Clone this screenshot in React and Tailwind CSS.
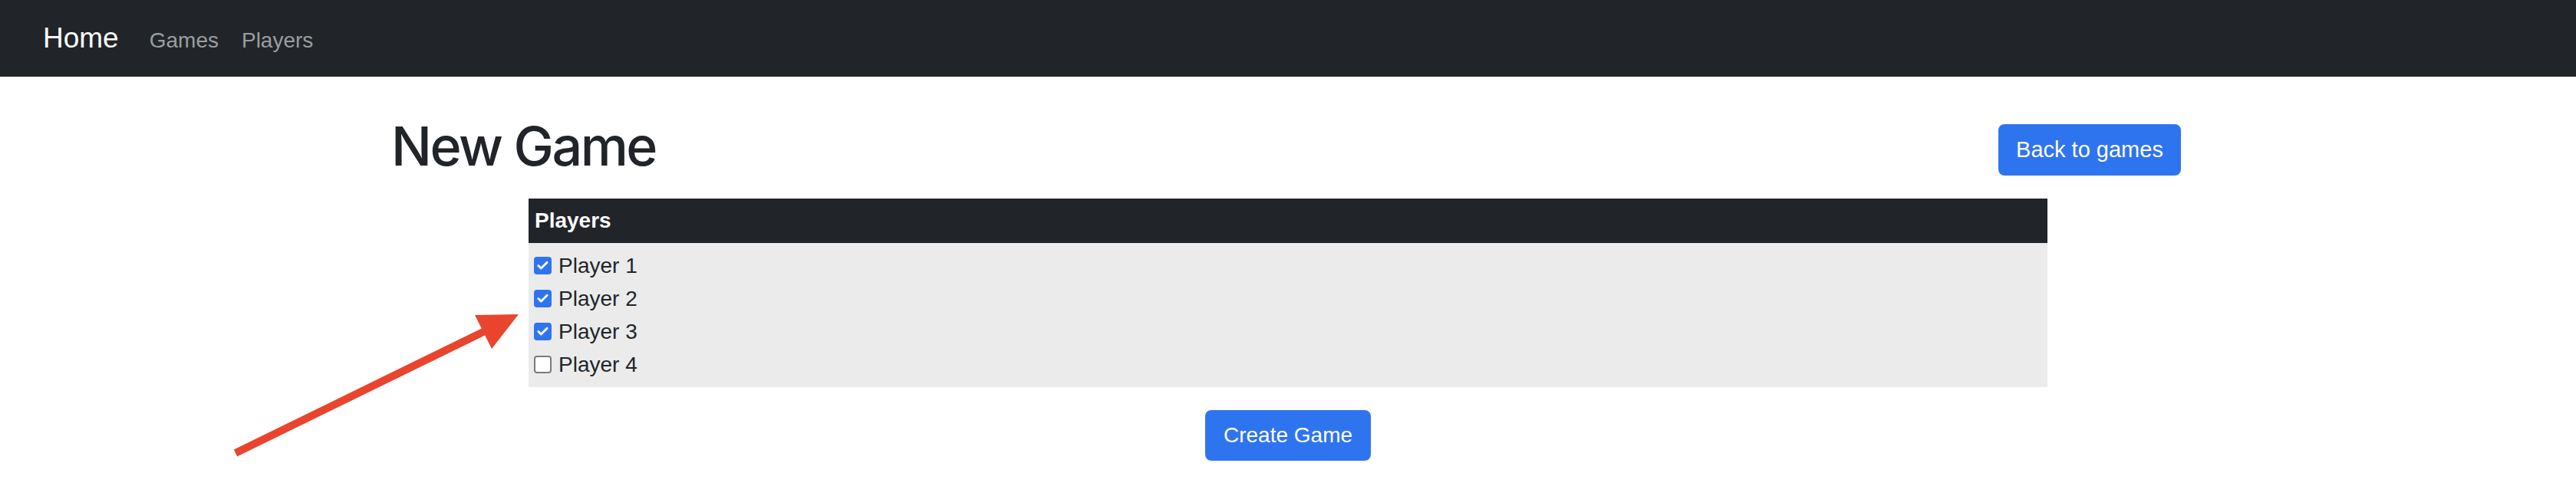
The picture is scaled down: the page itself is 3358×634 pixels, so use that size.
import { Check } from 'lucide-react';

const players = [
  { name: 'Player 1', checked: true },
  { name: 'Player 2', checked: true },
  { name: 'Player 3', checked: true },
  { name: 'Player 4', checked: false },
];

const Box = ({ checked }) =>
  checked ? (
    <span className="flex h-[23px] w-[23px] items-center justify-center rounded-[4px] bg-[#2f74ef]">
      <Check size={17} strokeWidth={4} className="text-white" />
    </span>
  ) : (
    <span className="h-[23px] w-[23px] rounded-[4px] border-2 border-[#7a7a7a] bg-white" />
  );

const App = () => {
  return (
    <div className="relative min-h-[634px] bg-white font-['Liberation_Sans',Arial,sans-serif] text-[#212529]">
      {/* Navbar */}
      <nav className="flex h-[100px] items-baseline bg-[#212529] pl-[56px] pt-[31px]">
        <a className="text-[37px] leading-none text-white">Home</a>
        <div className="ml-[40px] flex gap-[30px] text-[28px] leading-none text-[#9b9d9f]">
          <a>Games</a>
          <a>Players</a>
        </div>
      </nav>

      <main className="mx-auto w-[2328px]">
        {/* Title row */}
        <div className="mt-[62px] flex items-center justify-between">
          <h1 className="-ml-[5px] -mt-[10px] font-['Inter',sans-serif] text-[70px] font-medium leading-none tracking-[-2.5px]">
            New Game
          </h1>
          <button className="h-[67px] w-[238px] rounded-[8px] bg-[#2f74ef] text-[29px] text-white">
            Back to games
          </button>
        </div>

        {/* Players table */}
        <div className="mx-auto mt-[30px] w-[1980px]">
          <div className="flex h-[58px] items-center bg-[#212529] px-[8px] text-[28px] font-bold text-white">
            Players
          </div>
          <div className="flex flex-col bg-[#ebebeb] py-[8px] pl-[7px]">
            {players.map((p) => (
              <label key={p.name} className="flex h-[43px] items-center gap-[9px] text-[28px]">
                <Box checked={p.checked} />
                <span>{p.name}</span>
              </label>
            ))}
          </div>
        </div>

        <div className="mt-[30px] flex justify-center">
          <button className="h-[66px] w-[216px] rounded-[8px] bg-[#2f74ef] text-[28px] text-white">
            Create Game
          </button>
        </div>
      </main>

      {/* annotation arrow */}
      <svg className="absolute left-0 top-0" width="700" height="634" viewBox="0 0 700 634">
        <line x1="307" y1="591" x2="632" y2="432" stroke="#e9452e" strokeWidth="10" />
        <polygon points="619,411 676,410 641,455" fill="#e9452e" />
      </svg>
    </div>
  );
};

export default App;
